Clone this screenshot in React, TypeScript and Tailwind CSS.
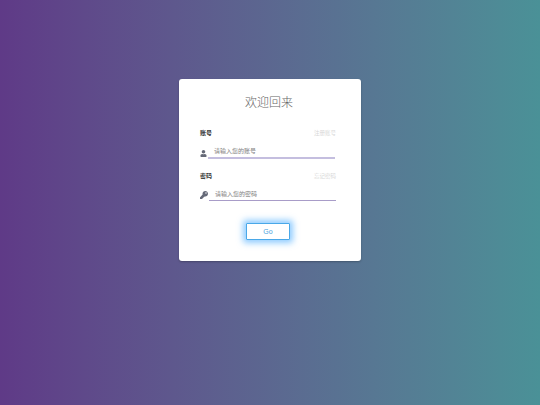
import React from 'react';
import { FaUser, FaKey } from 'react-icons/fa';

const font = { fontFamily: '"Liberation Sans", "Noto Sans CJK SC", sans-serif' };

function Field({ label, link, placeholder, icon, rowClass, lineClass }: { label: string; link: string; placeholder: string; icon: React.ReactNode; rowClass: string; lineClass: string }) {
  return (
    <div className="flex flex-col">
      <div className="flex items-center justify-between h-[10px]">
        <span className="text-[6px] leading-[10px] font-bold text-[#333]">{label}</span>
        <span className="text-[5.5px] leading-[10px] text-[#d8d8d8]">{link}</span>
      </div>
      <div className={`flex items-end mt-[3px] ${rowClass}`}>
        <div className="w-[8px] h-[12px] flex items-center justify-start text-[#666a78]">{icon}</div>
        <div className={`flex-1 h-full flex items-center pt-[3px] ${lineClass}`}>
          <span className="text-[6px] leading-[10px] text-[#808080] pl-[6px]">{placeholder}</span>
        </div>
      </div>
    </div>
  );
}

export default function App() {
  return (
    <div
      className="w-[540px] h-[405px] flex justify-center items-start pt-[79px] bg-gradient-to-r from-[#5f3a87] to-[#4a9197]"
      style={font}
    >
      <div className="w-[182px] h-[182px] bg-white rounded-[3px] shadow-[0_1px_2px_rgba(0,0,0,0.25)] pl-[21px] pr-[25px] pt-[15px] flex flex-col">
        <h1 className="text-[12px] leading-[18px] font-light text-center text-[#666] ml-[2px]">欢迎回来</h1>
        <div className="flex flex-col gap-[12px] mt-[16px]">
          <Field
            label="账号"
            link="注册账号"
            placeholder="请输入您的账号"
            icon={<FaUser size={7} />}
            rowClass="h-[18px]"
            lineClass="border-b-2 border-[#c4bedf] mr-[1px]"
          />
          <Field
            label="密码"
            link="忘记密码"
            placeholder="请输入您的密码"
            icon={<FaKey size={8} />}
            rowClass="h-[17px]"
            lineClass="border-b border-[#a89cc8] ml-[1px]"
          />
        </div>
        <div className="flex justify-center mt-[22px]">
          <button
            type="button"
            className="w-[44px] h-[17px] bg-white border border-[#4aa8e8] rounded-[1px] text-[7px] leading-[10px] text-[#4a9fe0] shadow-[0_0_6px_3px_rgba(70,170,255,0.6)]"
          >
            Go
          </button>
        </div>
      </div>
    </div>
  );
}
